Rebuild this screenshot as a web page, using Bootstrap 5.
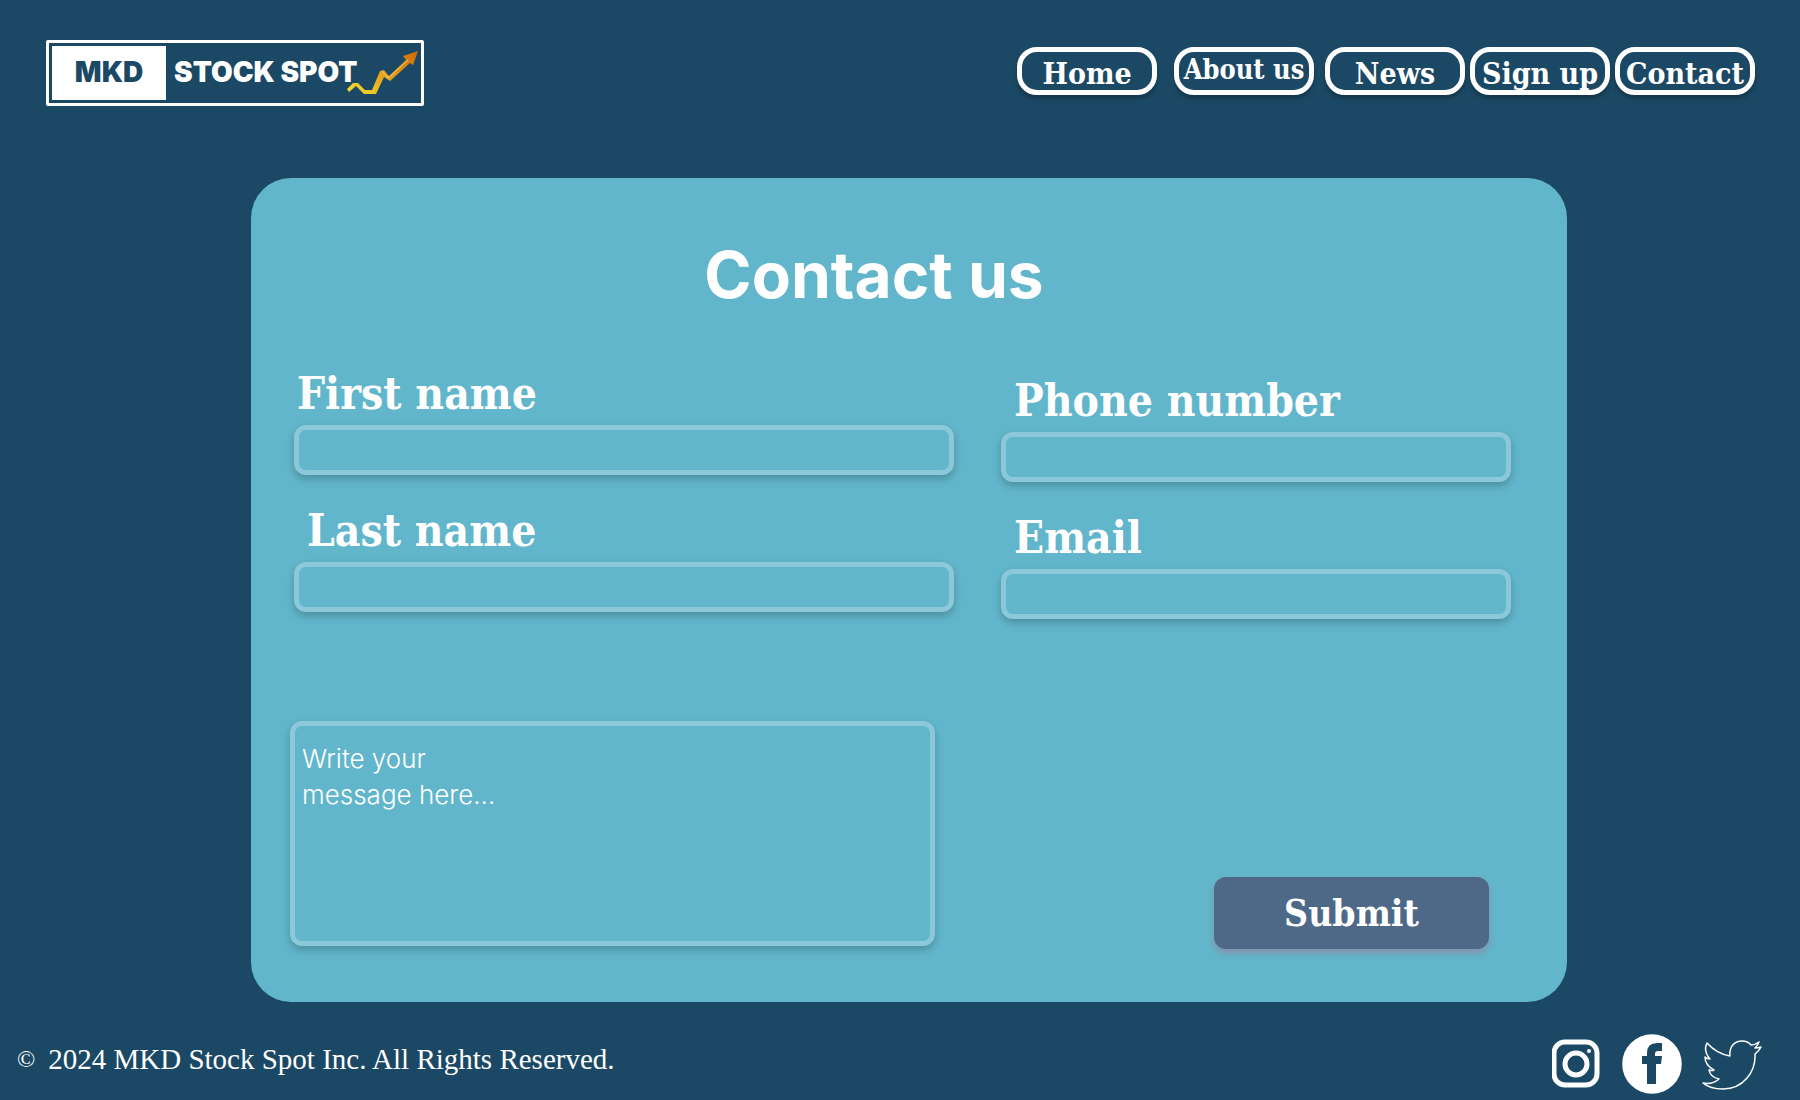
<!DOCTYPE html>
<html lang="en">
<head>
<meta charset="utf-8">
<meta name="viewport" content="width=device-width, initial-scale=1">
<title>MKD Stock Spot – Contact us</title>
<link href="https://cdn.jsdelivr.net/npm/bootstrap@5.3.0/dist/css/bootstrap.min.css" rel="stylesheet">
<style>
  :root { --navy: #1b4965; --sky: #62b6cb; --edge: #8bc8d9; --slab: "DejaVu Serif Condensed", "Liberation Serif", serif; }
  body { background: var(--navy); color: #fff; font-family: Inter, sans-serif; }
  .site-head { padding: 40px 45px 0 46px; margin-bottom: 72px; }
  .brand { width: 378px; height: 66px; border: 3px solid #fff; border-radius: 2px; padding: 3px; color: #fff; font-size: 28px; font-weight: 900; line-height: 1; }
  .brand-tag { width: 114px; background: #fff; color: var(--navy); padding-bottom: 2px; }
  .brand-name { padding: 0 0 2px 8px; }
  .brand-arrow { right: 2px; bottom: 7px; width: 72px; height: 45px; }
  .menu { padding-top: 7px; gap: 5px; }
  .pill { width: 140px; height: 48px; border: 5px solid #fff; border-radius: 20px; box-shadow: 0 4px 4px rgba(0,0,0,.25); color: #fff; font: bold 30px/44px var(--slab); white-space: nowrap; }
  .pill-first { margin-right: 12px; }
  .pill-sm { font-size: 27px; line-height: 36px; margin-right: 6px; }
  .panel { background: var(--sky); border-radius: 40px; margin: 0 233px 0 251px; padding: 57px 0 53px; }
  .panel-title { font-size: 64px; font-weight: 700; line-height: 80px; padding-right: 70px; margin-bottom: 48px; }
  .fields { display: grid; grid-template-columns: 660fr 510fr; column-gap: 47px; padding: 0 56px 0 43px; margin-bottom: 77px; }
  .fields-side { padding-top: 7px; }
  .field-name { display: block; font: bold 44px/62px var(--slab); padding-left: 3px; white-space: nowrap; }
  .indent { padding-left: 13px; }
  .box { background: var(--sky); border: 5px solid var(--edge); border-radius: 12px; box-shadow: 0 4px 8px rgba(0,0,0,.22); color: #fff; }
  .box:focus { background: var(--sky); border-color: #fff; color: #fff; }
  input.box { height: 50px; margin-bottom: 25px; }
  .compose { display: grid; grid-template-columns: 645fr 275fr; column-gap: 279px; padding: 0 78px 0 39px; min-height: 228px; }
  textarea.box { height: 225px; padding: 15px 7px; font-size: 26px; font-weight: 300; line-height: 36px; resize: none; }
  textarea.box::placeholder { color: #fff; opacity: 1; }
  .send { height: 72px; background: #4e6987; border: 0; border-radius: 12px; color: #fff; font: bold 37px/70px var(--slab); box-shadow: 0 4px 6px rgba(190,90,120,.4); }
  .site-foot { padding: 32px 37px 5px 17px; }
  .legal { font: 29px/50px "Liberation Serif", serif; gap: 13px; }
  .legal-mark { font-size: 24px; }
  .social { gap: 20px; }
  @media (max-width: 1500px) {
    .panel { margin: 0 24px; }
    .site-head, .site-foot, .menu { flex-wrap: wrap; }
  }
  @media (max-width: 900px) {
    .fields, .compose { grid-template-columns: 1fr; row-gap: 24px; padding: 0 24px; }
    .panel-title { padding: 0; }
  }
</style>
<script src="https://cdn.jsdelivr.net/npm/bootstrap@5.3.0/dist/js/bootstrap.bundle.min.js" defer></script>
</head>
<body>
<header class="site-head d-flex justify-content-between align-items-start">
  <a href="#" class="brand d-flex position-relative text-decoration-none">
    <span class="brand-tag d-flex align-items-center justify-content-center">MKD</span>
    <span class="brand-name d-flex align-items-center">STOCK SPOT</span>
    <svg class="brand-arrow position-absolute" viewBox="0 0 72 45" aria-hidden="true">
      <defs><linearGradient id="gold" x1="0" y1="1" x2="1" y2="0"><stop offset="0" stop-color="#f4e02c"/><stop offset=".45" stop-color="#e5a41f"/><stop offset="1" stop-color="#d06a05"/></linearGradient></defs>
      <path d="M0 38L6 32H11L18 39H25L33 20L37 19L42 25L59 9L56 5L71 0L66 14L63 12L43 30L37 26L29 43H17L9 35L2 41Z" fill="url(#gold)"/>
      <path d="M35 20L41 27L61 9" fill="none" stroke="#f4cd72" stroke-width="1"/>
    </svg>
  </a>
  <nav class="menu d-flex" aria-label="Main">
    <a href="#" class="pill pill-first text-center text-decoration-none">Home</a>
    <a href="#" class="pill pill-sm text-center text-decoration-none">About us</a>
    <a href="#" class="pill text-center text-decoration-none">News</a>
    <a href="#" class="pill text-center text-decoration-none">Sign up</a>
    <a href="#" class="pill text-center text-decoration-none">Contact</a>
  </nav>
</header>

<main>
  <form class="panel">
    <h1 class="panel-title text-center">Contact us</h1>
    <div class="fields">
      <div>
        <label class="field-name" for="first">First name</label>
        <input class="form-control box" type="text" id="first">
        <label class="field-name indent" for="last">Last name</label>
        <input class="form-control box" type="text" id="last">
      </div>
      <div class="fields-side">
        <label class="field-name indent" for="phone">Phone number</label>
        <input class="form-control box" type="tel" id="phone">
        <label class="field-name indent" for="email">Email</label>
        <input class="form-control box" type="email" id="email">
      </div>
    </div>
    <div class="compose">
      <textarea class="form-control box" aria-label="Message" placeholder="Write your&#10;message here..."></textarea>
      <button type="submit" class="send align-self-end">Submit</button>
    </div>
  </form>
</main>

<footer class="site-foot d-flex justify-content-between align-items-start">
  <div class="legal d-flex"><span class="legal-mark">©</span><span>2024 MKD Stock Spot Inc. All Rights Reserved.</span></div>
  <div class="social d-flex align-items-center">
    <a href="#" aria-label="Instagram"><svg class="d-block" width="50" height="50" viewBox="1 0 50 50" fill="none" stroke="#fff"><rect x="3" y="3" width="43" height="43" rx="11" stroke-width="5"/><circle cx="25" cy="25" r="11" stroke-width="5"/><circle cx="38" cy="12" r="2" fill="#fff" stroke="none"/></svg></a>
    <a href="#" aria-label="Facebook"><svg class="d-block" width="60" height="60" viewBox="0 0 60 60"><circle cx="30" cy="30" r="29.800" fill="#fff"/><path d="M25 50V30H20V22H25V19Q25 9 35 9H40V17H36Q33 17 33 20V22H40L39 30H34V50Z" fill="#1b4965"/></svg></a>
    <a href="#" aria-label="Twitter"><svg class="d-block" width="61" height="60" viewBox="2 0 61 60" fill="none" stroke="#fff" stroke-width="1.500" stroke-linejoin="round"><path d="M3 49Q12 51 19 45Q10 43 9 36Q12 37 14 36Q5 31 5 23Q7 25 10 25Q3 17 7 9Q17 20 30 22C29 12 35 7 42 7Q48 7 51 11Q55 11 59 8Q58 11 55 14Q58 14 61 13Q59 17 55 20C56 38 43 55 23 55Q10 55 3 49Z"/></svg></a>
  </div>
</footer>
</body>
</html>
